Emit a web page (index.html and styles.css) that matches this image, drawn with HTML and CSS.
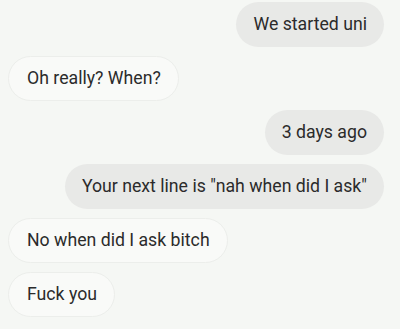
FILE: index.html
```html
<!DOCTYPE html>
<html>
<head>
<meta charset="utf-8">
<link rel="stylesheet" href="styles.css">
</head>
<body>
<div class="chat">
  <div class="msg sent">We started uni</div>
  <div class="msg recv">Oh really? When?</div>
  <div class="msg sent">3 days ago</div>
  <div class="msg sent">Your next line is "nah when did I ask"</div>
  <div class="msg recv">No when did I ask bitch</div>
  <div class="msg recv">Fuck you</div>
</div>
</body>
</html>
```
FILE: styles.css
```css
html, body {
  margin: 0;
  padding: 0;
  background: #f5f7f4;
}
.chat {
  display: flex;
  flex-direction: column;
  gap: 9px;
  padding: 2px 16px 0 8px;
  font-family: Roboto, "Noto Sans", sans-serif;
  font-size: 17.7px;
  color: #2b2b2b;
}
.msg {
  box-sizing: border-box;
  height: 45px;
  line-height: 45px;
  padding: 0 17px;
  border-radius: 23px;
  white-space: nowrap;
}
.sent {
  align-self: flex-end;
  background: #e8e9e7;
}
.recv {
  align-self: flex-start;
  background: #f9faf8;
  border: 1px solid #eceeeb;
  line-height: 43px;
  padding: 0 17px 0 18px;
}
```
